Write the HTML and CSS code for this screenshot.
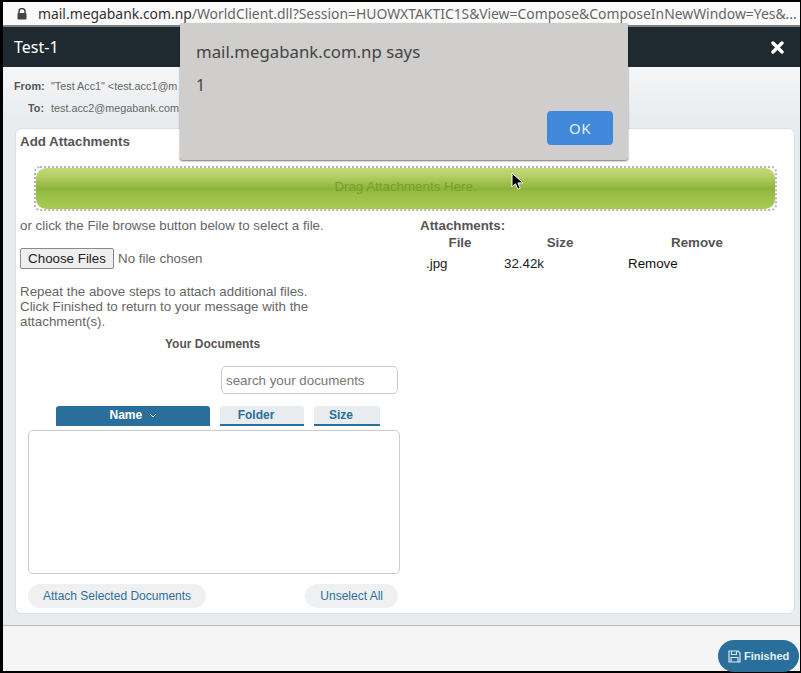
FILE: index.html
```html
<!DOCTYPE html>
<html lang="en">
<head>
    <title>Test-1</title>
    <link rel="stylesheet" href="styles.css">
</head>
<body>
    <div class="window">
        <div class="urlbar">
            <svg class="lock" width="10" height="12" viewBox="0 0 10 12">
                <path d="M2 5V3.5a3 3 0 0 1 6 0V5" fill="none" stroke="#444" stroke-width="1.5"/>
                <rect x="0.5" y="5" width="9" height="6.5" rx="1" fill="#444"/>
            </svg>
            <span class="url"><b>mail.megabank.com.np</b>/WorldClient.dll?Session=HUOWXTAKTIC1S&amp;View=Compose&amp;ComposeInNewWindow=Yes&amp;...</span>
        </div>
        <div class="header">
            <span class="header-title">Test-1</span>
            <svg class="close" width="13" height="13" viewBox="0 0 13 13">
                <path d="M2 2l9 9M11 2l-9 9" stroke="#fff" stroke-width="3.4" stroke-linecap="round"/>
            </svg>
        </div>
        <div class="content">
            <div class="addr">
                <div class="addr-row"><span class="addr-label">From:</span><span>"Test Acc1" &lt;test.acc1@m</span></div>
                <div class="addr-row"><span class="addr-label">To:</span><span>test.acc2@megabank.com</span></div>
            </div>
            <div class="panel">
                <h3 class="panel-title">Add Attachments</h3>
                <div class="dropzone"><div class="dropbar">Drag Attachments Here.</div></div>
                <div class="columns">
                    <div class="left">
                        <p class="hint">or click the File browse button below to select a file.</p>
                        <div class="file-row">
                            <button class="choose">Choose Files</button>
                            <span class="nofile">No file chosen</span>
                        </div>
                        <p class="repeat">Repeat the above steps to attach additional files.<br>Click Finished to return to your message with the attachment(s).</p>
                        <div class="docs-title">Your Documents</div>
                        <div class="search-row">
                            <input class="search" type="text" placeholder="search your documents">
                        </div>
                        <div class="tabs">
                            <div class="tab tab-name">Name
                                <svg width="8" height="5" viewBox="0 0 8 5"><path d="M1 1l3 3 3-3" fill="none" stroke="#fff" stroke-width="1"/></svg>
                            </div>
                            <div class="tab tab-folder">Folder</div>
                            <div class="tab tab-size">Size</div>
                        </div>
                        <div class="doclist"></div>
                        <div class="doc-actions">
                            <button class="pill">Attach Selected Documents</button>
                            <button class="pill">Unselect All</button>
                        </div>
                    </div>
                    <div class="right">
                        <div class="att-title">Attachments:</div>
                        <div class="att-grid att-head">
                            <span>File</span><span>Size</span><span>Remove</span>
                        </div>
                        <div class="att-grid att-row">
                            <span class="att-file">.jpg</span><span class="att-size">32.42k</span><span class="att-remove">Remove</span>
                        </div>
                    </div>
                </div>
            </div>
        </div>
        <div class="footer">
            <button class="finished">
                <svg width="13" height="13" viewBox="0 0 13 13">
                    <path d="M1 1h9l2 2v9H1z" fill="none" stroke="#dbe7ef" stroke-width="1.2"/>
                    <path d="M3.5 1v3.5h5V1M3 12V7.5h7V12" fill="none" stroke="#dbe7ef" stroke-width="1.2"/>
                </svg>
                Finished
            </button>
        </div>
    </div>

    <div class="dialog">
        <div class="dialog-title">mail.megabank.com.np says</div>
        <div class="dialog-msg">1</div>
        <button class="dialog-ok">OK</button>
    </div>

    <svg class="cursor" width="13" height="19" viewBox="0 0 13 19">
        <path d="M1 1v14l3.5-3.2 2.3 5.4 2.4-1-2.3-5.3H12z" fill="#000" stroke="#fff" stroke-width="1"/>
    </svg>
</body>
</html>
```

FILE: styles.css
```css
* {
    box-sizing: border-box;
}

html, body {
    height: 673px;
}

body {
    margin: 0;
    padding: 2px 1px 2px 3px;
    background-color: #000;
    font-family: "Liberation Sans", Arial, sans-serif;
    color: #555;
    overflow: hidden;
}

.window {
    display: flex;
    flex-direction: column;
    height: 669px;
    background-color: #e9ecef;
}

.urlbar {
    display: flex;
    align-items: center;
    height: 23px;
    padding-left: 14px;
    background-color: #fbfafa;
    font-family: "Noto Sans", sans-serif;
    font-size: 13.9px;
    color: #666;
    white-space: nowrap;
}

.lock {
    flex: none;
    margin-right: 11px;
}

.url b {
    font-weight: normal;
    color: #333;
}

.header {
    display: flex;
    justify-content: space-between;
    align-items: center;
    height: 42px;
    padding: 0 10px 0 11px;
    background-color: #1f2a30;
    border-top: 2px solid #7d8285;
    color: #fff;
}

.header-title {
    font-family: "Noto Sans", sans-serif;
    font-size: 16px;
}

.close {
    margin-right: 6px;
}

.content {
    flex: 1;
    padding: 8px 5px 10px 12px;
    background: linear-gradient(#f5f6f7, #e9ecef 50px);
    border-bottom: 1px solid #b4b8bb;
}

.addr {
    height: 53px;
    font-size: 10.8px;
    color: #666;
}

.addr-row {
    display: flex;
    height: 22px;
    align-items: center;
}

.addr-label {
    width: 30px;
    margin-left: -1px;
    margin-right: 7px;
    text-align: right;
    font-weight: bold;
    color: #555;
}

.panel {
    height: 486px;
    padding: 5px 5px 0 4px;
    background-color: #fff;
    border: 1px solid #dde1e4;
    border-radius: 7px;
}

.panel-title {
    margin: 0;
    font-size: 13.33px;
    line-height: 16px;
    color: #555;
}

.dropzone {
    height: 45px;
    margin: 16px 12px 0 14px;
    border: 2px dotted #b4b4b4;
    border-radius: 6px;
}

.dropbar {
    height: 100%;
    border-radius: 10px;
    background: linear-gradient(#c4d87a 0, #b5cf66 20%, #8db43a 50%, #98bd45 62%, #a8cb55 100%);
    text-align: center;
    line-height: 38px;
    font-size: 13.33px;
    color: #73a12c;
}

.columns {
    display: flex;
    margin-top: 7px;
}

.left {
    width: 400px;
    font-size: 13.33px;
    color: #666;
}

.hint {
    margin: 0;
    line-height: 15px;
}

.file-row {
    display: flex;
    align-items: center;
    gap: 4px;
    margin-top: 15px;
}

.choose {
    width: 94px;
    height: 21px;
    padding: 0;
    background-color: #efefef;
    border: 1px solid #8a8a8a;
    border-radius: 2px;
    font-family: inherit;
    font-size: 13.33px;
    color: #222;
}

.repeat {
    width: 310px;
    margin: 15px 0 0 0;
    line-height: 15px;
}

.docs-title {
    width: 385px;
    margin-top: 8px;
    text-align: center;
    font-size: 12px;
    font-weight: bold;
    line-height: 14px;
    color: #555;
}

.search-row {
    display: flex;
    justify-content: flex-end;
    margin-top: 15px;
    padding-right: 22px;
}

.search {
    width: 177px;
    height: 28px;
    padding: 0 4px;
    border: 1px solid #ccc;
    border-radius: 5px;
    font-family: inherit;
    font-size: 13.33px;
}

.search::placeholder {
    color: #777;
}

.tabs {
    display: flex;
    gap: 10px;
    margin: 12px 0 0 36px;
}

.tab {
    height: 20px;
    padding-right: 12px;
    border-radius: 3px 3px 0 0;
    background-color: #e9edf0;
    border-bottom: 2px solid #2a6f9b;
    text-align: center;
    font-size: 12px;
    font-weight: bold;
    line-height: 19px;
    color: #2a6f9b;
}

.tab-name {
    width: 154px;
    padding-right: 0;
    background-color: #2a6f9b;
    color: #fff;
}

.tab-name svg {
    margin-left: 3px;
    vertical-align: 1px;
}

.tab-folder {
    width: 84px;
}

.tab-size {
    width: 66px;
}

.doclist {
    width: 372px;
    height: 144px;
    margin: 4px 0 0 8px;
    border: 1px solid #ccc;
    border-radius: 5px;
}

.doc-actions {
    display: flex;
    justify-content: space-between;
    width: 370px;
    margin: 10px 0 0 8px;
}

.pill {
    height: 24px;
    padding: 0 15px;
    background-color: #eef0f2;
    border: 0;
    border-radius: 12px;
    font-family: inherit;
    font-size: 12px;
    color: #2f7099;
}

.right {
    flex: 1;
    font-size: 13.33px;
    color: #444;
}

.att-title {
    line-height: 15px;
    font-weight: bold;
    color: #555;
}

.att-grid {
    display: grid;
    grid-template-columns: 78px 122px 1fr;
    margin-left: 1px;
    line-height: 15px;
}

.att-head {
    margin-top: 2px;
    font-weight: bold;
    color: #555;
}

.att-head span:nth-child(1),
.att-head span:nth-child(2) {
    text-align: center;
}

.att-head span:nth-child(3) {
    padding-left: 50px;
}

.att-row {
    margin-top: 6px;
    color: #222;
}

.att-file {
    padding-left: 5px;
}

.att-size {
    padding-left: 5px;
}

.att-remove {
    padding-left: 7px;
    color: #111;
}

.footer {
    display: flex;
    justify-content: flex-end;
    align-items: flex-end;
    height: 45px;
    padding-right: 1px;
    background-color: #f6f5f5;
}

.finished {
    display: flex;
    align-items: center;
    gap: 3px;
    width: 81px;
    height: 32px;
    margin-bottom: -1px;
    padding: 0 0 0 10px;
    background-color: #2a6f9b;
    border: 0;
    border-radius: 16px;
    font-family: inherit;
    font-size: 11px;
    font-weight: bold;
    color: #e6eff5;
}

.dialog {
    position: absolute;
    left: 180px;
    top: 23px;
    width: 448px;
    height: 137px;
    padding: 16px;
    background-color: #cfcecd;
    border-radius: 2px;
    box-shadow: 0 1px 2px rgba(0, 0, 0, 0.55);
    font-family: "Noto Sans", sans-serif;
    color: #444;
}

.dialog-title {
    font-size: 16.8px;
    line-height: 26px;
}

.dialog-msg {
    margin-top: 10px;
    font-size: 16px;
    line-height: 20px;
}

.dialog-ok {
    position: absolute;
    right: 15px;
    bottom: 15px;
    width: 66px;
    height: 34px;
    background-color: #3f88da;
    border: 0;
    border-radius: 4px;
    font-family: inherit;
    font-size: 15px;
    letter-spacing: 0.5px;
    color: #e4eefa;
}

.cursor {
    position: absolute;
    left: 511px;
    top: 172px;
}
```
